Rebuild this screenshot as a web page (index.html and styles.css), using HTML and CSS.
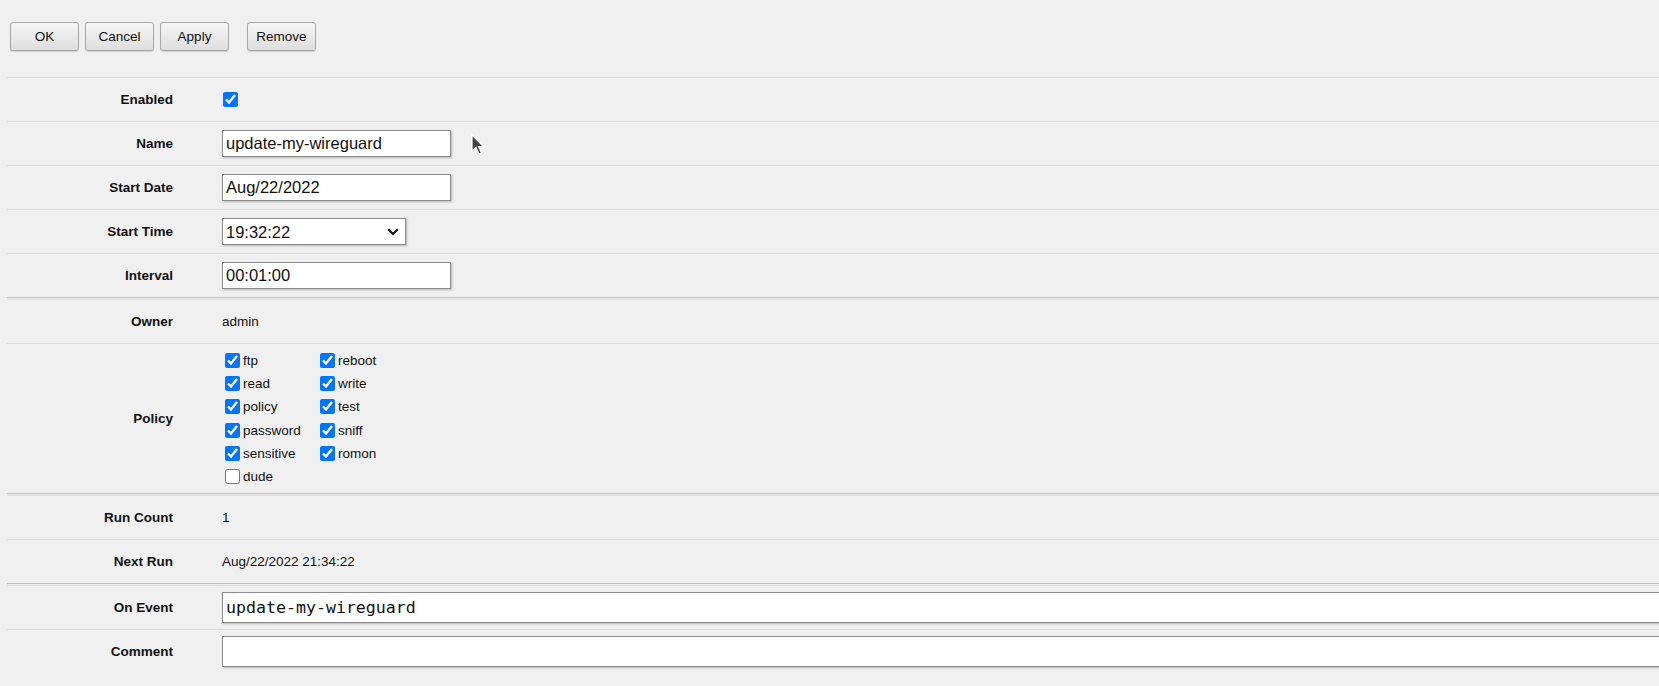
FILE: index.html
```html
<!DOCTYPE html>
<html lang="en">
<head>
  <meta charset="UTF-8">
  <title>Scheduler - update-my-wireguard</title>
  <link rel="stylesheet" href="styles.css">
</head>
<body>

<div class="toolbar">
  <button class="btn">OK</button>
  <button class="btn">Cancel</button>
  <button class="btn">Apply</button>
  <button class="btn btn-gap">Remove</button>
</div>

<div class="form">
  <div class="section">
    <div class="row">
      <label class="label">Enabled</label>
      <div class="value"><input type="checkbox" class="check check-enabled" checked></div>
    </div>
    <div class="row">
      <label class="label">Name</label>
      <div class="value"><input type="text" class="field" value="update-my-wireguard"></div>
    </div>
    <div class="row">
      <label class="label">Start Date</label>
      <div class="value"><input type="text" class="field" value="Aug/22/2022"></div>
    </div>
    <div class="row">
      <label class="label">Start Time</label>
      <div class="value">
        <span class="select-wrap">
          <select class="select">
            <option>19:32:22</option>
            <option>startup</option>
          </select>
          <svg class="chevron" width="12" height="8" viewBox="0 0 12 8">
            <path d="M1.2 1.2 L6 6 L10.8 1.2" fill="none" stroke="#111" stroke-width="2.2"/>
          </svg>
        </span>
      </div>
    </div>
    <div class="row">
      <label class="label">Interval</label>
      <div class="value"><input type="text" class="field" value="00:01:00"></div>
    </div>
  </div>

  <div class="section">
    <div class="row">
      <label class="label">Owner</label>
      <div class="value text">admin</div>
    </div>
    <div class="row row-policy">
      <label class="label">Policy</label>
      <div class="value">
        <div class="policies">
          <label class="policy"><input type="checkbox" class="check" checked>ftp</label>
          <label class="policy"><input type="checkbox" class="check" checked>read</label>
          <label class="policy"><input type="checkbox" class="check" checked>policy</label>
          <label class="policy"><input type="checkbox" class="check" checked>password</label>
          <label class="policy"><input type="checkbox" class="check" checked>sensitive</label>
          <label class="policy"><input type="checkbox" class="check">dude</label>
          <label class="policy"><input type="checkbox" class="check" checked>reboot</label>
          <label class="policy"><input type="checkbox" class="check" checked>write</label>
          <label class="policy"><input type="checkbox" class="check" checked>test</label>
          <label class="policy"><input type="checkbox" class="check" checked>sniff</label>
          <label class="policy"><input type="checkbox" class="check" checked>romon</label>
        </div>
      </div>
    </div>
  </div>

  <div class="section">
    <div class="row">
      <label class="label">Run Count</label>
      <div class="value text">1</div>
    </div>
    <div class="row">
      <label class="label">Next Run</label>
      <div class="value text">Aug/22/2022 21:34:22</div>
    </div>
  </div>

  <div class="section">
    <div class="row">
      <label class="label">On Event</label>
      <div class="value"><input type="text" class="field field-wide field-mono" value="update-my-wireguard"></div>
    </div>
    <div class="row">
      <label class="label">Comment</label>
      <div class="value"><input type="text" class="field field-wide" value=""></div>
    </div>
  </div>
</div>

<svg class="pointer" width="14" height="22" viewBox="0 0 14 22">
  <path d="M1 1 L1 17 L5 13.5 L8 20 L10.5 19 L7.6 12.6 L12.5 12.6 Z" fill="#444" stroke="#fff" stroke-width="1.2"/>
</svg>

</body>
</html>
```

FILE: styles.css
```css
html, body {
  margin: 0;
  padding: 0;
  background-color: #f0f0f0;
  overflow: hidden;
}

body {
  font-family: "Liberation Sans", Arial, sans-serif;
  font-size: 13.5px;
  color: #111;
}

.toolbar {
  display: flex;
  gap: 6px;
  padding: 22px 0 0 10px;
  height: 77px;
  box-sizing: border-box;
}

.btn {
  width: 69px;
  height: 29px;
  padding: 0;
  font-family: inherit;
  font-size: 13.5px;
  color: #111;
  background: linear-gradient(#f6f6f6, #dedede);
  border: 1px solid #a8a8a8;
  border-radius: 3px;
  box-shadow: 0 1px 1px rgba(0,0,0,0.15);
  cursor: pointer;
}

.btn-gap {
  margin-left: 12px;
}

.form {
  margin-left: 7px;
  overflow: hidden;
}

.section + .section {
  border-top: 1px solid #bfbfbf;
  padding-top: 1px;
}

.row {
  display: flex;
  align-items: center;
  min-height: 43px;
  border-top: 1px solid #dcdcdc;
  overflow: hidden;
}

.label {
  flex: 0 0 166px;
  margin-right: 49px;
  text-align: right;
  font-weight: bold;
}

.value {
  flex: 1;
  min-width: 0;
  display: flex;
  align-items: center;
}

.value.text {
  display: block;
}

.field {
  width: 229px;
  height: 27px;
  box-sizing: border-box;
  margin: 0;
  padding: 0 3px;
  font-family: "Liberation Sans", Arial, sans-serif;
  font-size: 16.5px;
  color: #111;
  background: #fff;
  border: 1px solid #8c8c8c;
  box-shadow: 1px 1px 2px rgba(0,0,0,0.25);
  outline: none;
}

.field-wide {
  flex: 0 0 1600px;
  width: 1600px;
  height: 31px;
}

.field-mono {
  font-family: "DejaVu Sans Mono", monospace;
  font-size: 16.6px;
}

.select-wrap {
  position: relative;
  display: inline-block;
  height: 27px;
}

.select {
  width: 184px;
  height: 27px;
  margin: 0;
  padding: 0 3px;
  appearance: none;
  font-family: "Liberation Sans", Arial, sans-serif;
  font-size: 16.5px;
  color: #111;
  background: #fff;
  border: 1px solid #8c8c8c;
  border-radius: 0;
  box-shadow: 1px 1px 2px rgba(0,0,0,0.25);
  outline: none;
}

.chevron {
  position: absolute;
  right: 7px;
  top: 10px;
  pointer-events: none;
}

.check {
  width: 15px;
  height: 15px;
  margin: 0;
}

.check-enabled {
  margin-left: 1px;
}

.row-policy {
  min-height: 149px;
}

.policies {
  display: grid;
  grid-auto-flow: column;
  grid-template-rows: repeat(6, 23.4px);
  grid-template-columns: 95px 80px;
  margin-left: 3px;
}

.policy {
  display: flex;
  align-items: center;
  gap: 3px;
  cursor: pointer;
}

.pointer {
  position: absolute;
  left: 471px;
  top: 134px;
}
```
